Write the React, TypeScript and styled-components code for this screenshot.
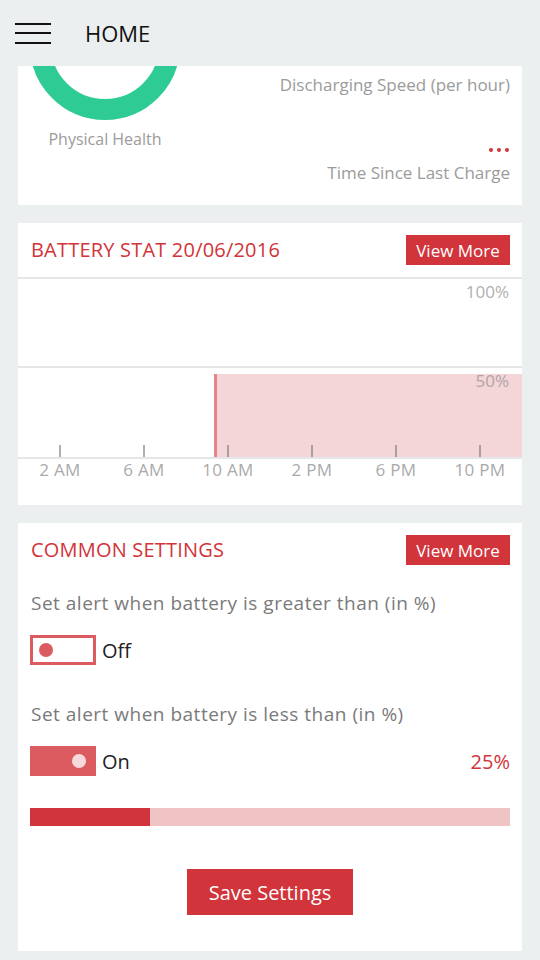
import styled, { createGlobalStyle } from 'styled-components';

const RED = '#d1343a';

const GlobalStyle = createGlobalStyle`
  html, body {
    margin: 0;
    padding: 0;
    background-color: #ebeff0;
    font-family: 'Open Sans', 'Noto Sans', sans-serif;
  }
`;

const ticks = ['2 AM', '6 AM', '10 AM', '2 PM', '6 PM', '10 PM'];

export default function App() {
  return (
    <>
      <GlobalStyle />
      <Header>
        <Hamburger>
          <span />
          <span />
          <span />
        </Hamburger>
        <HeaderTitle>HOME</HeaderTitle>
      </Header>
      <Page>
        <HealthCard>
          <HealthLeft>
            <svg width="150" height="55" viewBox="0 0 150 55">
              <circle cx="75" cy="-21" r="64.5" fill="none" stroke="#2ecc94" strokeWidth="21" />
            </svg>
            <MutedText>Physical Health</MutedText>
          </HealthLeft>
          <HealthRight>
            <MutedText $size={17}>Discharging Speed (per hour)</MutedText>
            <Dots>
              <i />
              <i />
              <i />
            </Dots>
            <MutedText $size={17}>Time Since Last Charge</MutedText>
          </HealthRight>
        </HealthCard>

        <Card>
          <CardHead>
            <CardTitle>BATTERY STAT 20/06/2016</CardTitle>
            <SmallButton>View More</SmallButton>
          </CardHead>
          <ChartSvg width="504" height="182" viewBox="0 0 504 182">
            <rect x="0" y="0" width="504" height="2" fill="#e4e6e7" />
            <rect x="0" y="89" width="504" height="2" fill="#e4e6e7" />
            <rect x="196" y="97" width="308" height="83" fill="#f5d6d8" />
            <rect x="196" y="97" width="3" height="83" fill="#e5838a" />
            {ticks.map((t, i) => (
              <rect key={t} x={41 + i * 84} y="168" width="2" height="12" fill="rgba(110,110,110,0.55)" />
            ))}
            <rect x="0" y="180" width="504" height="2" fill="#e4e6e7" />
            <text x="491" y="21" textAnchor="end" fontSize="17" fill="#b0b0b0" fontFamily="'Open Sans', sans-serif">
              100%
            </text>
            <text x="491" y="110" textAnchor="end" fontSize="17" fill="#b0a4a6" fontFamily="'Open Sans', sans-serif">
              50%
            </text>
          </ChartSvg>
          <AxisLabels>
            {ticks.map((t) => (
              <span key={t}>{t}</span>
            ))}
          </AxisLabels>
        </Card>

        <Card>
          <CardHead>
            <CardTitle>COMMON SETTINGS</CardTitle>
            <SmallButton>View More</SmallButton>
          </CardHead>
          <Settings>
            <SettingLabel>Set alert when battery is greater than (in %)</SettingLabel>
            <ToggleRow>
              <Toggle $on={false}>
                <Knob $on={false} />
              </Toggle>
              <ToggleText>Off</ToggleText>
            </ToggleRow>
            <SettingLabel $gap={37}>Set alert when battery is less than (in %)</SettingLabel>
            <ToggleRow>
              <Toggle $on>
                <Knob $on />
              </Toggle>
              <ToggleText>On</ToggleText>
              <Percent>25%</Percent>
            </ToggleRow>
            <Track>
              <TrackFill style={{ width: '25%' }} />
            </Track>
            <SaveButton>Save Settings</SaveButton>
          </Settings>
        </Card>
      </Page>
    </>
  );
}

const Header = styled.header`
  height: 66px;
  display: flex;
  align-items: center;
  padding-left: 15px;
  gap: 34px;
`;

const Hamburger = styled.div`
  width: 36px;
  height: 21px;
  display: flex;
  flex-direction: column;
  justify-content: space-between;

  span {
    display: block;
    height: 2px;
    background-color: #111;
  }
`;

const HeaderTitle = styled.div`
  font-size: 22px;
  color: #111;
  line-height: 30px;
`;

const Page = styled.main`
  display: flex;
  flex-direction: column;
  gap: 18px;
  padding: 0 18px 8px;
`;

const Card = styled.section`
  background-color: #fff;
  display: flex;
  flex-direction: column;
`;

const HealthCard = styled(Card)`
  flex-direction: row;
  height: 139px;
  overflow: hidden;
`;

const HealthLeft = styled.div`
  width: 150px;
  margin-left: 12px;
  display: flex;
  flex-direction: column;
  align-items: center;
  gap: 7px;

  svg {
    display: block;
  }
`;

const HealthRight = styled.div`
  flex: 1;
  display: flex;
  flex-direction: column;
  align-items: flex-end;
  padding: 8px 12px 0 0;
`;

const MutedText = styled.div<{ $size?: number }>`
  font-size: ${(p) => p.$size ?? 16}px;
  line-height: 22px;
  color: #9b9b9b;
  white-space: nowrap;
`;

const Dots = styled.div`
  display: flex;
  gap: 4px;
  margin: 52px 1px 10px 0;

  i {
    width: 4px;
    height: 4px;
    border-radius: 50%;
    background-color: ${RED};
  }
`;

const CardHead = styled.div`
  display: flex;
  align-items: center;
  justify-content: space-between;
  padding: 12px 12px 0 13px;
`;

const CardTitle = styled.h2`
  margin: 0;
  font-size: 20px;
  font-weight: 400;
  letter-spacing: 0.2px;
  color: ${RED};
  line-height: 30px;
`;

const SmallButton = styled.button`
  width: 104px;
  height: 30px;
  border: none;
  padding: 0;
  background-color: ${RED};
  color: #fff;
  font-family: inherit;
  font-size: 17px;
`;

const ChartSvg = styled.svg`
  display: block;
  margin-top: 12px;
`;

const AxisLabels = styled.div`
  display: grid;
  grid-template-columns: repeat(6, 1fr);
  padding-bottom: 24px;

  span {
    text-align: center;
    font-size: 17px;
    letter-spacing: 0.3px;
    line-height: 22px;
    color: #aaa;
  }
`;

const Settings = styled.div`
  display: flex;
  flex-direction: column;
  padding: 0 12px 36px 12px;
`;

const SettingLabel = styled.div<{ $gap?: number }>`
  margin-top: ${(p) => p.$gap ?? 26}px;
  padding-left: 1px;
  font-size: 19px;
  letter-spacing: 0.5px;
  line-height: 24px;
  color: #7a7a7a;
`;

const ToggleRow = styled.div`
  display: flex;
  align-items: center;
  margin-top: 20px;
`;

const Toggle = styled.div<{ $on: boolean }>`
  box-sizing: border-box;
  width: 66px;
  height: 30px;
  display: flex;
  align-items: center;
  justify-content: ${(p) => (p.$on ? 'flex-end' : 'flex-start')};
  padding: 0 ${(p) => (p.$on ? 7 : 6)}px;
  border: 3px solid #dc5b61;
  background-color: ${(p) => (p.$on ? '#dc5b61' : '#fff')};
`;

const Knob = styled.span<{ $on: boolean }>`
  width: 14px;
  height: 14px;
  border-radius: 50%;
  background-color: ${(p) => (p.$on ? '#f6d9db' : '#dc5b61')};
`;

const ToggleText = styled.span`
  margin-left: 6px;
  font-size: 20px;
  color: #222;
`;

const Percent = styled.span`
  margin-left: auto;
  font-size: 20px;
  color: ${RED};
`;

const Track = styled.div`
  height: 18px;
  margin-top: 32px;
  background-color: #f0c3c5;
`;

const TrackFill = styled.div`
  height: 100%;
  background-color: ${RED};
`;

const SaveButton = styled.button`
  align-self: center;
  width: 166px;
  height: 46px;
  margin-top: 43px;
  border: none;
  padding: 0;
  background-color: ${RED};
  color: #fff;
  font-family: inherit;
  font-size: 20px;
`;
